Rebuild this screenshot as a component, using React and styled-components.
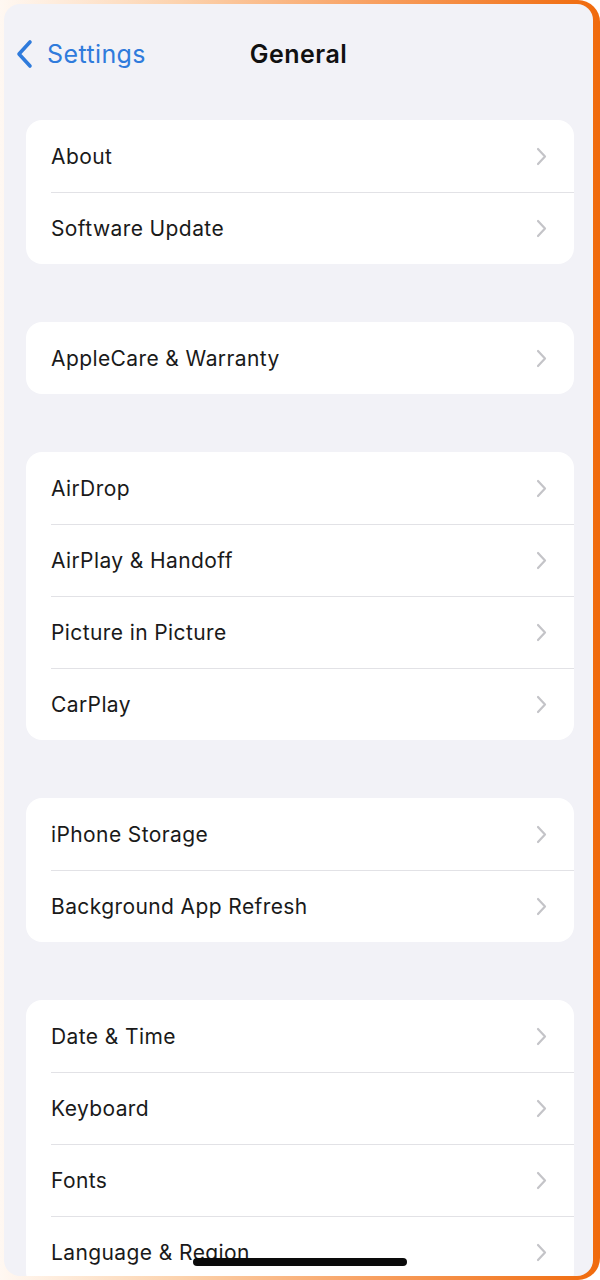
import styled, { createGlobalStyle } from "styled-components";

const Global = createGlobalStyle`
    html, body {
        margin: 0;
        padding: 0;
        background: #ffffff;
    }
    body {
        font-family: Inter, "Noto Sans", "Liberation Sans", sans-serif;
    }
`

const Frame = styled.div`
    width: 600px;
    height: 1280px;
    box-sizing: border-box;
    padding: 4px 7px 4px 4px;
    border-radius: 0 22px 22px 0;
    background: linear-gradient(90deg, #fff8f2 0%, #fcd2ad 30%, #f8a061 62%, #f06a0c 100%);
`

const Screen = styled.div`
    position: relative;
    height: 100%;
    background-color: #f2f2f7;
    border-radius: 16px;
    overflow: hidden;
`

const NavBar = styled.div`
    position: relative;
    height: 100px;
    display: flex;
    align-items: center;
    justify-content: center;
`

const Back = styled.div`
    position: absolute;
    left: 10px;
    top: 0;
    bottom: 0;
    display: flex;
    align-items: center;
    gap: 13px;
    color: #2f7bdc;
    font-size: 25px;
    letter-spacing: 0.4px;
`

const Title = styled.div`
    font-size: 25px;
    font-weight: 600;
    letter-spacing: 0.5px;
    color: #111111;
`

const Groups = styled.div`
    display: flex;
    flex-direction: column;
    gap: 58px;
    padding: 16px 19px 0 22px;
`

const Card = styled.div`
    background-color: #ffffff;
    border-radius: 16px;
    overflow: hidden;
`

const Row = styled.div`
    height: 72px;
    margin-left: 25px;
    padding-right: 27px;
    display: flex;
    align-items: center;
    justify-content: space-between;
    border-top: ${props => props.first ? "none" : "1px solid #e2e2e6"};
    box-sizing: border-box;
`

const Label = styled.span`
    font-size: 21px;
    letter-spacing: 0.4px;
    color: #1a1a1a;
`

const HomeBar = styled.div`
    position: absolute;
    left: 189px;
    bottom: 10px;
    width: 214px;
    height: 8px;
    border-radius: 4px;
    background-color: #0a0a0a;
`

const groups = [
    ["About", "Software Update"],
    ["AppleCare & Warranty"],
    ["AirDrop", "AirPlay & Handoff", "Picture in Picture", "CarPlay"],
    ["iPhone Storage", "Background App Refresh"],
    ["Date & Time", "Keyboard", "Fonts", "Language & Region"],
]

function Chevron() {
    return (
        <svg width="11" height="19" viewBox="0 0 11 19">
            <path d="M2 2 L9 9.5 L2 17" fill="none" stroke="#c4c4c8" strokeWidth="2.2" strokeLinecap="round" strokeLinejoin="round" />
        </svg>
    )
}

function App() {
    return (
        <Frame>
            <Global />
            <Screen>
                <NavBar>
                    <Back>
                        <svg width="20" height="30" viewBox="0 0 20 30">
                            <path d="M16 3 L5 15 L16 27" fill="none" stroke="#2f7bdc" strokeWidth="3.6" strokeLinecap="round" strokeLinejoin="round" />
                        </svg>
                        Settings
                    </Back>
                    <Title>General</Title>
                </NavBar>
                <Groups>
                    {groups.map((items, i) => (
                        <Card key={i}>
                            {items.map((item, j) => (
                                <Row key={item} first={j === 0}>
                                    <Label>{item}</Label>
                                    <Chevron />
                                </Row>
                            ))}
                        </Card>
                    ))}
                </Groups>
                <HomeBar />
            </Screen>
        </Frame>
    )
}

export default App
